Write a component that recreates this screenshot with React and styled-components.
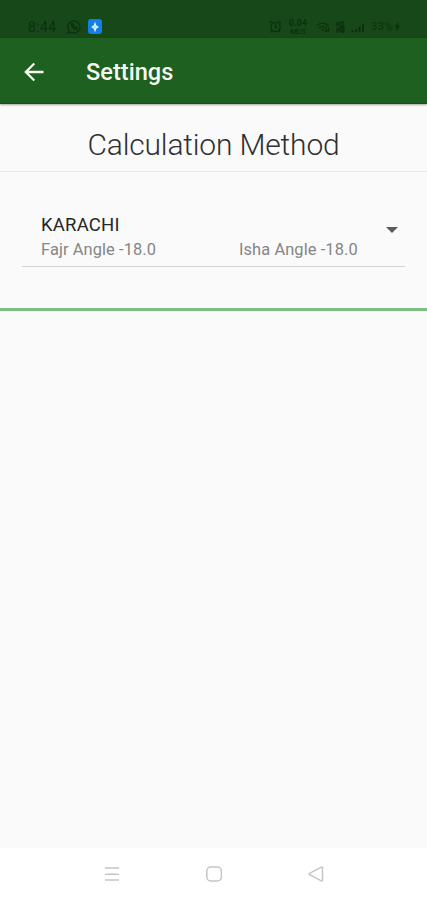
import styled, { createGlobalStyle } from "styled-components";

const methods = [{ name: "KARACHI", fajr: "-18.0", isha: "-18.0" }];

const App = () => {
  return (
    <>
      <GlobalStyle />
      <Screen>
        <StatusBar />
        <AppBar>
          <BackButton aria-label="Back">
            <svg width="20" height="20" viewBox="0 0 20 20">
              <path
                d="M19.5 10H1.8M10.3 1.5L1.8 10l8.5 8.5"
                fill="none"
                stroke="#f4f8f1"
                strokeWidth="2.3"
              />
            </svg>
          </BackButton>
          <Title>Settings</Title>
        </AppBar>
        <Content>
          <Heading>Calculation Method</Heading>
          <MethodSelect method={methods[0]} />
        </Content>
        <NavBar />
      </Screen>
    </>
  );
};

const StatusBar = () => {
  return (
    <Status>
      <Clock>8:44</Clock>
      <WhatsAppIcon width="14" height="14" viewBox="0 0 14 14">
        <path d="M.9 13.1l.9-3A6 6 0 1 1 4 12.2z" />
        <path d="M4.6 4c-.8 2.2 2.8 6 5.2 5.1l.3-1.2-1.5-.8-.8.7C6.9 7.4 6.3 6.7 6 6l.7-.8-.7-1.5z" />
      </WhatsAppIcon>
      <AppBadge>
        <svg width="10" height="12" viewBox="0 0 10 12">
          <path d="M5 .5l1.3 3.7L9 6 6.3 7.7 5 11.5 3.7 7.7 1 6l2.7-1.8z" fill="#d8efff" />
          <circle cx="5" cy="6" r="0.8" fill="#8cc6fa" />
        </svg>
      </AppBadge>
      <Indicators>
        <StatusIcon width="13" height="13" viewBox="0 0 13 13">
          <circle cx="6.5" cy="7" r="4.7" />
          <path d="M6.5 4.3V7l1.8 1M.8 3L3.3.9M9.700.9L12.200 3M3 11l-1 1.300M10 11l1 1.300" />
        </StatusIcon>
        <Speed>
          <span>0.04</span>
          <span>KB/S</span>
        </Speed>
        <StatusIcon width="14" height="12" viewBox="0 0 15 12">
          <path d="M1 4.5c3.7-3.3 8.5-3.3 12 0M3.3 7c2.4-2.1 5.2-2.1 7 0M5.8 9.5c1-.9 1.8-.9 2.8 0" />
          <path d="M11 6.5V11M9.8 9.8L11 11l1.2-1.2M13.5 11V6.5" />
        </StatusIcon>
        <StatusIcon width="9" height="12" viewBox="0 0 9 12">
          <path d="M1 1v4.5M3 1v4.5M1 3.2h2M5 1v4.5h2.5V1zM1 6.8V11l3-4.2V11M5.5 7H8v4H5.5zM5.5 9H8" />
        </StatusIcon>
        <StatusIcon width="14" height="12" viewBox="0 0 14 12">
          <path d="M1.5 9v2.2M5 8v3.2M8.5 6v5.2M12 3.2v8" strokeWidth="1.9" />
        </StatusIcon>
        <Battery>
          33%
          <svg width="7" height="9" viewBox="0 0 7 9">
            <path d="M4.200 0L.8 5h2L2.300 9 6.200 3.800h-2z" fill="#0c300e" />
          </svg>
        </Battery>
      </Indicators>
    </Status>
  );
};

const MethodSelect = ({ method }) => {
  return (
    <Select>
      <Method>
        <MethodName>{method.name}</MethodName>
        <Angles>
          <Angle>Fajr Angle {method.fajr}</Angle>
          <Angle>Isha Angle {method.isha}</Angle>
        </Angles>
      </Method>
      <Caret width="12" height="6" viewBox="0 0 12 6">
        <path d="M0 0h12L6 6z" fill="#5c5c5c" />
      </Caret>
    </Select>
  );
};

const NavBar = () => {
  return (
    <Nav>
      <NavIcon width="16" height="16" viewBox="0 0 16 16">
        <path d="M1 2h14M1 8.2h14M1 14h14" />
      </NavIcon>
      <NavIcon width="16" height="16" viewBox="0 0 16 16">
        <rect x="0.8" y="1" width="14.6" height="14" rx="4" />
      </NavIcon>
      <NavIcon width="16" height="16" viewBox="0 0 16 16">
        <path d="M13.3 1.2L1.6 7.3q-1 .7 0 1.4l11.7 6.1q1.2.5 1.2-.8V2q0-1.3-1.2-.8z" />
      </NavIcon>
    </Nav>
  );
};

const GlobalStyle = createGlobalStyle`
  * {
    box-sizing: border-box;
  }

  body {
    margin: 0;
    font-family: Roboto, sans-serif;
    background: #fafafa;
  }
`;

const Screen = styled.div`
  height: 900px;
  display: flex;
  flex-direction: column;
  overflow: hidden;
  background: #fafafa;
`;

const Status = styled.div`
  height: 38px;
  flex-shrink: 0;
  display: flex;
  align-items: center;
  padding: 15px 26px 0 28px;
  background: #174819;
  color: #0c300e;
`;

const Clock = styled.span`
  width: 39px;
  font-size: 14px;
  letter-spacing: 0.4px;
  line-height: 16px;
`;

const StatusIcon = styled.svg`
  fill: none;
  stroke: #0c300e;
  stroke-width: 1.3;
`;

const WhatsAppIcon = styled(StatusIcon)`
  margin-right: 7px;
`;

const AppBadge = styled.span`
  width: 14px;
  height: 15px;
  display: flex;
  align-items: center;
  justify-content: center;
  border-radius: 3px;
  background: #127fe8;
`;

const Indicators = styled.div`
  display: flex;
  align-items: center;
  gap: 6px;
  margin-left: auto;
`;

const Speed = styled.span`
  width: 20px;
  display: flex;
  flex-direction: column;
  align-items: center;
  font-size: 6.5px;
  font-weight: 700;
  letter-spacing: 0.3px;
  line-height: 8px;
  margin-right: 2px;

  span:first-child {
    font-size: 8.5px;
    line-height: 10px;
  }
`;

const Battery = styled.span`
  display: flex;
  align-items: center;
  gap: 1px;
  font-size: 11px;
  letter-spacing: 0.5px;
  line-height: 12px;
`;

const AppBar = styled.header`
  height: 66px;
  flex-shrink: 0;
  display: flex;
  align-items: center;
  padding: 2px 24px 0;
  background: #1d6020;
  border-bottom: 1px solid #155218;
  box-shadow: 0 1px 2px rgba(0, 0, 0, 0.35);
`;

const BackButton = styled.button`
  width: 62px;
  padding: 0;
  border: 0;
  background: none;
  display: flex;
`;

const Title = styled.h1`
  margin: 0;
  color: #f4f8f1;
  font-size: 23.6px;
  font-weight: 500;
  line-height: 28px;
`;

const Content = styled.main`
  height: 207px;
  border-bottom: 3px solid #7fbe82;
`;

const Heading = styled.h2`
  height: 68px;
  margin: 0;
  padding-top: 23px;
  border-bottom: 1px solid #e9e9ea;
  color: #303030;
  font-size: 30px;
  font-weight: 300;
  letter-spacing: -0.17px;
  line-height: 36px;
  text-align: center;
`;

const Select = styled.div`
  height: 53px;
  display: flex;
  align-items: flex-start;
  margin: 42px 22px 0;
  padding: 0 7px 0 19px;
  border-bottom: 1px solid #d4d4d4;
`;

const Method = styled.div`
  flex: 1;
`;

const MethodName = styled.div`
  color: #262626;
  font-size: 18.5px;
  letter-spacing: 0.2px;
  line-height: 22px;
`;

const Angles = styled.div`
  display: flex;
  margin-top: 3px;
`;

const Angle = styled.span`
  width: 198px;
  color: #858585;
  font-size: 16.4px;
  letter-spacing: 0.1px;
  line-height: 22px;
  white-space: nowrap;

  &:last-child {
    width: auto;
  }
`;

const Caret = styled.svg`
  margin-top: 13px;
`;

const Nav = styled.nav`
  height: 52px;
  display: flex;
  align-items: center;
  justify-content: center;
  gap: 86px;
  margin-top: auto;
  background: #fff;
`;

const NavIcon = styled.svg`
  fill: none;
  stroke: #c5c5c5;
  stroke-width: 1.5;
`;

export default App;
